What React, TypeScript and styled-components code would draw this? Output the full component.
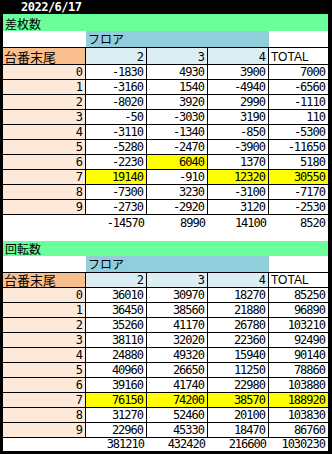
import { FC } from 'react'
import styled, { createGlobalStyle } from 'styled-components'

type Row = { label: string; values: number[]; hl?: number[] }

type Block = {
  title: string
  rows: Row[]
  totals: number[]
  compact?: boolean
}

const blocks: Block[] = [
  {
    title: '差枚数',
    rows: [
      { label: '0', values: [-1830, 4930, 3900, 7000] },
      { label: '1', values: [-3160, 1540, -4940, -6560] },
      { label: '2', values: [-8020, 3920, 2990, -1110] },
      { label: '3', values: [-50, -3030, 3190, 110] },
      { label: '4', values: [-3110, -1340, -850, -5300] },
      { label: '5', values: [-5280, -2470, -3900, -11650] },
      { label: '6', values: [-2230, 6040, 1370, 5180], hl: [1] },
      { label: '7', values: [19140, -910, 12320, 30550], hl: [0, 2, 3] },
      { label: '8', values: [-7300, 3230, -3100, -7170] },
      { label: '9', values: [-2730, -2920, 3120, -2530] },
    ],
    totals: [-14570, 8990, 14100, 8520],
  },
  {
    title: '回転数',
    rows: [
      { label: '0', values: [36010, 30970, 18270, 85250] },
      { label: '1', values: [36450, 38560, 21880, 96890] },
      { label: '2', values: [35260, 41170, 26780, 103210] },
      { label: '3', values: [38110, 32020, 22360, 92490] },
      { label: '4', values: [24880, 49320, 15940, 90140] },
      { label: '5', values: [40960, 26650, 11250, 78860] },
      { label: '6', values: [39160, 41740, 22980, 103880] },
      { label: '7', values: [76150, 74200, 38570, 188920], hl: [0, 1, 2, 3] },
      { label: '8', values: [31270, 52460, 20100, 103830] },
      { label: '9', values: [22960, 45330, 18470, 86760] },
    ],
    totals: [381210, 432420, 216600, 1030230],
    compact: true,
  },
]

const GlobalStyle = createGlobalStyle`
  html, body {
    margin: 0;
    padding: 0;
    background: #ffffff;
  }
`

const App: FC = () => (
  <>
    <GlobalStyle />
    <Frame>
      <DateBar>2022/6/17</DateBar>
      {blocks.map((b) => (
        <Sheet key={b.title} $compact={b.compact}>
          <SectionTitle>{b.title}</SectionTitle>
          <Blank />
          <FloorCell>フロア</FloorCell>
          <Blank />
          <CornerCell>台番末尾</CornerCell>
          <ColHead>2</ColHead>
          <ColHead>3</ColHead>
          <ColHead>4</ColHead>
          <TotalHead>TOTAL</TotalHead>
          {b.rows.map((r) => (
            <RowGroup key={r.label}>
              <LabelCell>{r.label}</LabelCell>
              {r.values.map((v, j) => (
                <NumCell key={j} $hl={r.hl?.includes(j)} $last={j === 3}>
                  {v}
                </NumCell>
              ))}
            </RowGroup>
          ))}
          <Blank />
          {b.totals.map((v, j) => (
            <TotalCell key={j}>{v}</TotalCell>
          ))}
        </Sheet>
      ))}
    </Frame>
  </>
)

const Frame = styled.div`
  width: 332px;
  height: 454px;
  box-sizing: border-box;
  background: #ffffff;
  border-left: 3px solid #000;
  border-right: 4px solid #000;
  border-bottom: 3px solid #000;
  overflow: hidden;
`

const DateBar = styled.div`
  height: 14px;
  background: #000;
  color: #fff;
  font-family: 'DejaVu Sans Mono', monospace;
  font-weight: bold;
  font-size: 12px;
  letter-spacing: -0.5px;
  line-height: 14px;
  padding-left: 18px;
`

const Sheet = styled.div<{ $compact?: boolean }>`
  display: grid;
  grid-template-columns: 83px 61px 61px 61px 1fr;
  grid-template-rows: ${(p) =>
    p.$compact
      ? '15px 16px 16px repeat(10, 15px) 13px'
      : '17px 16px 18px repeat(10, 15px) 15px'};
  padding-bottom: ${(p) => (p.$compact ? '0' : '11px')};
`

const RowGroup = styled.div`
  display: contents;
`

const cellText = `
  box-sizing: border-box;
  display: flex;
  align-items: flex-end;
  white-space: nowrap;
  color: #000;
`

const numText = `
  justify-content: flex-end;
  overflow: hidden;
  font-family: 'DejaVu Sans Mono', monospace;
  font-size: 12px;
  letter-spacing: -1px;
  line-height: 14px;
  padding-right: 3px;
`

const SectionTitle = styled.div`
  ${cellText}
  grid-column: 1 / -1;
  background: #6bff9b;
  font-family: 'Noto Sans CJK JP', sans-serif;
  font-size: 12px;
  line-height: 15px;
  padding-left: 2px;
`

const Blank = styled.div`
  background: #fff;
`

const FloorCell = styled.div`
  ${cellText}
  grid-column: span 3;
  background: #92cddc;
  font-family: 'Noto Sans CJK JP', sans-serif;
  font-size: 12px;
  line-height: 16px;
  padding-left: 2px;
`

const CornerCell = styled.div`
  ${cellText}
  background: #fabf8f;
  border-top: 1px solid #000;
  border-right: 1px solid #000;
  border-bottom: 1px solid #000;
  font-family: 'Noto Sans CJK JP', sans-serif;
  font-size: 13px;
  line-height: 14px;
  padding-left: 1px;
`

const ColHead = styled.div`
  ${cellText}
  ${numText}
  background: #daeef3;
  border-top: 1px solid #000;
  border-right: 1px solid #000;
  border-bottom: 1px solid #000;
`

const TotalHead = styled.div`
  ${cellText}
  background: #fff;
  border-top: 1px solid #000;
  border-bottom: 1px solid #000;
  font-family: 'Liberation Sans', Arial, sans-serif;
  font-size: 12px;
  line-height: 14px;
  padding-left: 2px;
`

const LabelCell = styled.div`
  ${cellText}
  ${numText}
  background: #fde9d9;
  border-right: 1px solid #000;
  border-bottom: 1px solid #000;
`

const NumCell = styled.div<{ $hl?: boolean; $last?: boolean }>`
  ${cellText}
  ${numText}
  background: ${(p) => (p.$hl ? '#ffff00' : '#fff')};
  border-right: ${(p) => (p.$last ? 'none' : '1px solid #000')};
  border-bottom: 1px solid #000;
`

const TotalCell = styled.div`
  ${cellText}
  ${numText}
  background: #fff;
`

export default App
